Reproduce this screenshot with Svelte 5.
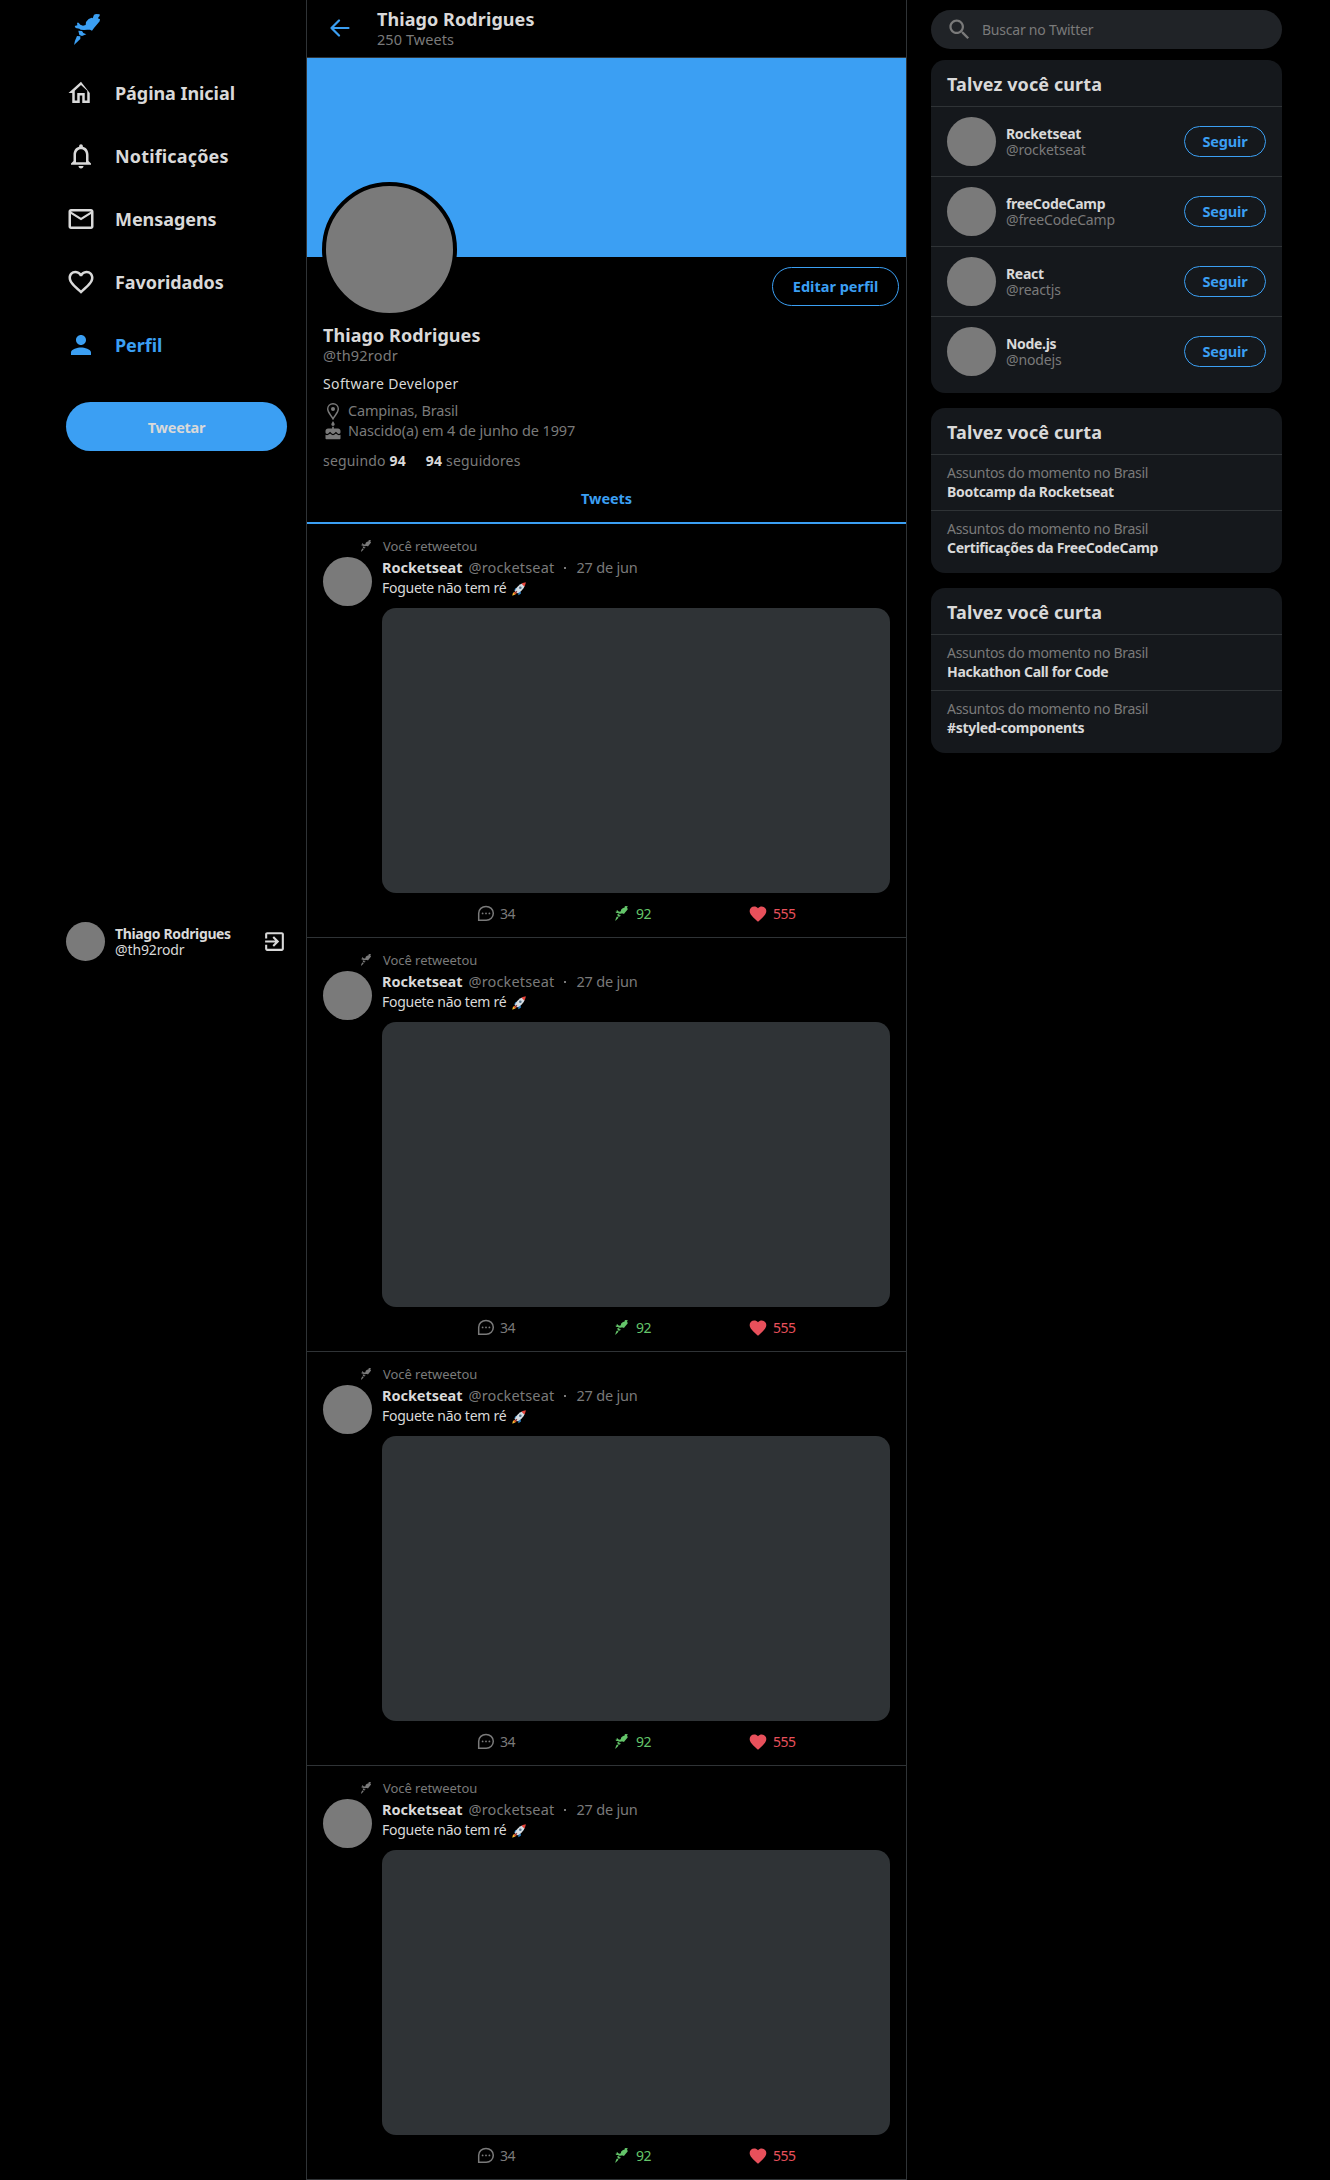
<script>
  const nav = [
    { icon: 'home', label: 'Página Inicial' },
    { icon: 'bell', label: 'Notificações' },
    { icon: 'mail', label: 'Mensagens' },
    { icon: 'heart', label: 'Favoridados' },
    { icon: 'person', label: 'Perfil', active: true }
  ];

  const paths = {
    home: 'M12 5.69l5 4.5V18h-2v-6H9v6H7v-7.81l5-4.5M12 3L2 12h3v8h6v-6h2v6h6v-8L12 3z',
    bell: 'M12 22c1.1 0 2-.9 2-2h-4c0 1.100.9 2 2 2zm6-6v-5c0-3.070-1.630-5.640-4.500-6.320V4c0-.830-.670-1.500-1.500-1.500s-1.500.670-1.500 1.500v.680C7.640 5.360 6 7.920 6 11v5l-2 2v1h16v-1l-2-2zm-2 1H8v-6c0-2.480 1.510-4.500 4-4.500s4 2.020 4 4.500v6z',
    mail: 'M22 6c0-1.100-.900-2-2-2H4c-1.100 0-2 .900-2 2v12c0 1.100.900 2 2 2h16c1.100 0 2-.900 2-2V6zm-2 0l-8 5-8-5h16zm0 12H4V8l8 5 8-5v10z',
    heart: 'M16.500 3c-1.740 0-3.410.810-4.500 2.090C10.910 3.810 9.240 3 7.500 3 4.420 3 2 5.420 2 8.500c0 3.780 3.400 6.860 8.550 11.540L12 21.350l1.450-1.320C18.600 15.360 22 12.280 22 8.500 22 5.420 19.580 3 16.500 3zm-4.400 15.550l-.100.100-.100-.100C7.140 14.240 4 11.390 4 8.500 4 6.500 5.500 5 7.500 5c1.540 0 3.040.990 3.570 2.360h1.870C13.460 5.990 14.960 5 16.500 5c2 0 3.500 1.500 3.500 3.500 0 2.890-3.140 5.740-7.900 10.050z',
    person: 'M12 12c2.210 0 4-1.790 4-4s-1.790-4-4-4-4 1.790-4 4 1.790 4 4 4zm0 2c-2.670 0-8 1.340-8 4v2h16v-2c0-2.660-5.330-4-8-4z',
    exit: 'M10.090 15.590L11.500 17l5-5-5-5-1.410 1.410L12.670 11H3v2h9.670l-2.580 2.590zM19 3H5c-1.110 0-2 .900-2 2v4h2V5h14v14H5v-4H3v4c0 1.100.890 2 2 2h14c1.100 0 2-.900 2-2V5c0-1.100-.900-2-2-2z',
    magnifier: 'M15.500 14h-.790l-.280-.270C15.410 12.590 16 11.110 16 9.500 16 5.910 13.090 3 9.500 3S3 5.910 3 9.500 5.910 16 9.500 16c1.610 0 3.090-.590 4.230-1.570l.270.280v.790l5 4.990L20.490 19l-4.990-5zm-6 0C7.010 14 5 11.990 5 9.500S7.010 5 9.500 5 14 7.010 14 9.500 11.990 14 9.500 14z',
    cake: 'M12 6c1.110 0 2-.900 2-2 0-.380-.100-.730-.290-1.030L12 0l-1.710 2.970c-.190.300-.290.650-.290 1.030 0 1.100.900 2 2 2zm4.600 9.990l-1.070-1.070-1.080 1.070c-1.300 1.300-3.580 1.310-4.890 0l-1.070-1.070-1.090 1.070C6.750 16.640 5.880 17 4.960 17c-.730 0-1.400-.230-1.960-.610V21c0 .550.450 1 1 1h16c.550 0 1-.450 1-1v-4.610c-.560.380-1.230.610-1.960.610-.920 0-1.790-.360-2.440-1.010zM18 9h-5V7h-2v2H6c-1.660 0-3 1.340-3 3v1.540c0 1.080.880 1.960 1.960 1.960.520 0 1.020-.200 1.380-.570l2.140-2.130 2.130 2.130c.740.740 2.030.740 2.770 0l2.140-2.130 2.130 2.130c.370.370.860.570 1.380.570 1.080 0 1.960-.880 1.960-1.960V12C21 10.340 19.660 9 18 9z',
    fullheart: 'M12 21.350l-1.450-1.320C5.400 15.360 2 12.280 2 8.500 2 5.420 4.420 3 7.500 3c1.740 0 3.410.810 4.500 2.090C13.090 3.810 14.760 3 16.500 3 19.580 3 22 5.420 22 8.500c0 3.780-3.400 6.860-8.550 11.540L12 21.350z'
  };

  const tweets = [1, 2, 3, 4];

  const people = [
    { name: 'Rocketseat', user: '@rocketseat' },
    { name: 'freeCodeCamp', user: '@freeCodeCamp' },
    { name: 'React', user: '@reactjs' },
    { name: 'Node.js', user: '@nodejs' }
  ];

  const topics = [
    ['Bootcamp da Rocketseat', 'Certificações da FreeCodeCamp'],
    ['Hackathon Call for Code', '#styled-components']
  ];
</script>

{#snippet glyph(name)}
  <svg class="glyph {name}" viewBox="0 0 24 24"><path d={paths[name]} /></svg>
{/snippet}

{#snippet rocket()}
  <svg class="rocket" viewBox="0 0 78 93">
    <path d="M60 2 66 0 77 1 77 6 73 10 73 14 78 15 77 22 60 42 54 50 48 47 40 47 30 48 20 47 16 44 5 42 2 36 10 34 9 26 14 26 19 32 27 35 35 33 36 24 44 15 53 11 56 13Z" />
    <path d="M13 50 24 51 28 57 37 61 24 66 16 63Z" />
    <path d="M9 66 19 67 19 75 0 93 3 80Z" />
  </svg>
{/snippet}

<div class="page">
  <aside class="menu">
    <div class="logo">{@render rocket()}</div>
    <nav>
      {#each nav as item}
        <a class="nav-item {item.icon}-link" class:active={item.active}>
          <span class="nav-icon">{@render glyph(item.icon)}</span>
          <span>{item.label}</span>
        </a>
      {/each}
    </nav>
    <button class="tweet-button">Tweetar</button>
    <div class="account">
      <div class="avatar small"></div>
      <div class="account-text">
        <strong>Thiago Rodrigues</strong>
        <span>@th92rodr</span>
      </div>
      {@render glyph('exit')}
    </div>
  </aside>

  <main>
    <header>
      <svg class="back" viewBox="0 0 20 18">
        <path d="M18.500 9H1.500M9 1.500 1.500 9 9 16.500" />
      </svg>
      <div>
        <strong>Thiago Rodrigues</strong>
        <span>250 Tweets</span>
      </div>
    </header>

    <div class="banner"><div class="portrait"></div></div>

    <section class="profile">
      <button class="edit">Editar perfil</button>
      <h1>Thiago Rodrigues</h1>
      <p class="handle">@th92rodr</p>
      <p class="bio">Software Developer</p>
      <ul class="facts">
        <li>
          <svg class="pin" viewBox="0 0 12 17">
            <path d="M6 .7C3 .7.700 3 .700 6c0 3.600 3.400 6.200 5.300 9.900C7.900 12.200 11.300 9.600 11.300 6 11.300 3 9 .7 6 .7Z" />
            <circle cx="6" cy="6" r="2" />
          </svg>
          <span class="place">Campinas, Brasil</span>
        </li>
        <li>{@render glyph('cake')}<span>Nascido(a) em 4 de junho de 1997</span></li>
      </ul>
      <div class="follow">
        <span>seguindo <b>94</b></span>
        <span><b>94</b> seguidores</span>
      </div>
    </section>

    <div class="tab">Tweets</div>

    {#each tweets as tweet (tweet)}
      <article>
        <div class="retweeted">{@render rocket()}<span>Você retweetou</span></div>
        <div class="body">
          <div class="avatar"></div>
          <div class="content">
            <div class="author">
              <strong>Rocketseat</strong>
              <span class="user">@rocketseat</span>
              <span class="dot"></span>
              <time>27 de jun</time>
            </div>
            <p class="text">
              <span>Foguete não tem ré</span>
              <svg class="emoji" viewBox="0 0 14 14">
                <path fill="#2b7fc0" d="M3.300 6.300 6 5.200 4.600 8 2 9ZM8.600 9.300 9 11.500 6.400 13.200 6.200 10.600Z" />
                <path fill="#f6b82c" d="M2.200 9.700 4.500 11.800 2.600 12.700.300 13.800.700 11.500Z" />
                <path fill="#df3b2f" d="M3.200 9.200 4.900 10.900 3 12 1.900 11.200Z" />
                <path fill="#d5dde3" d="M10.200 1.500 12.600 3.900C11.900 6.800 8 10.300 5.200 11.300L2.800 8.900C4.300 5.500 7.200 2.400 10.200 1.500Z" />
                <path fill="#e8443a" d="M9.600 1.700C11 .800 12.600.400 13.800.300 13.700 1.500 13.300 3.200 12.300 4.600Z" />
                <circle cx="8.300" cy="5.800" r="1.300" fill="#52718a" />
                <path fill="#8a3038" d="M4.500 8.700 5.400 9.600 3.400 11.500 2.800 10.900Z" />
              </svg>
            </p>
            <div class="media"></div>
            <div class="actions">
              <div class="comment">
                <svg class="bubble" viewBox="0 0 18 17">
                  <path d="M1.700 15.300V8.200C1.700 4.300 4.900 1.400 9 1.400S16.300 4.400 16.300 8.300 13.200 15.300 9.200 15.300Z" />
                  <circle cx="5.600" cy="8.400" r=".9" /><circle cx="9" cy="8.400" r=".9" /><circle cx="12.400" cy="8.400" r=".9" />
                </svg>
                <span>34</span>
              </div>
              <div class="share">{@render rocket()}<span>92</span></div>
              <div class="like">{@render glyph('fullheart')}<span>555</span></div>
            </div>
          </div>
        </div>
      </article>
    {/each}
  </main>

  <aside class="side">
    <label class="search">
      {@render glyph('magnifier')}
      <span>Buscar no Twitter</span>
    </label>

    <section class="card">
      <h2>Talvez você curta</h2>
      {#each people as person}
        <div class="person-row">
          <div class="avatar"></div>
          <div class="names">
            <strong>{person.name}</strong>
            <span>{person.user}</span>
          </div>
          <button class="follow-button">Seguir</button>
        </div>
      {/each}
    </section>

    {#each topics as group}
      <section class="card">
        <h2>Talvez você curta</h2>
        {#each group as topic}
          <div class="topic">
            <span>Assuntos do momento no Brasil</span>
            <strong>{topic}</strong>
          </div>
        {/each}
      </section>
    {/each}
  </aside>
</div>

<style>
  :global(body) {
    background: #000;
  }

  .page {
    --blue: #3b9ff3;
    --gray: #7a7a7a;
    --line: #2f3336;
    --white: #d9d9d9;
    display: grid;
    grid-template-columns: 221px 601px 356px;
    column-gap: 19px;
    padding-left: 66px;
    width: 1264px;
    height: 2180px;
    overflow: hidden;
    color: var(--white);
    font-family: 'Noto Sans', sans-serif;
    font-size: 14px;
    line-height: 20px;
  }

  .page * {
    box-sizing: border-box;
  }

  h1,
  h2,
  p,
  ul {
    margin: 0;
    padding: 0;
    list-style: none;
  }

  button {
    padding: 0;
    font: inherit;
    font-size: 14.5px;
    font-weight: 700;
    border-radius: 25px;
  }

  svg {
    display: block;
    flex: none;
    fill: currentColor;
  }

  .glyph {
    width: 30px;
    height: 30px;
  }

  .avatar {
    flex: none;
    width: 49px;
    height: 49px;
    border-radius: 50%;
    background: var(--gray);
  }

  /* left menu */
  .menu {
    display: flex;
    flex-direction: column;
    height: 961px;
  }

  .logo {
    padding: 14px 0 0 8px;
    color: var(--blue);
  }

  .logo .rocket {
    width: 26px;
    height: 31px;
  }

  nav {
    display: flex;
    flex-direction: column;
    gap: 23px;
    margin-top: 28px;
  }

  .nav-item {
    display: flex;
    align-items: center;
    gap: 19px;
    height: 40px;
    font-size: 18px;
    font-weight: 700;
    letter-spacing: -0.06px;
  }

  .bell-link {
    letter-spacing: 0.15px;
  }

  .nav-icon {
    width: 30px;
  }

  .active {
    color: var(--blue);
  }

  .tweet-button {
    height: 49px;
    margin-top: 37px;
    border: 0;
    background: var(--blue);
    color: var(--white);
    letter-spacing: -0.25px;
  }

  .account {
    display: flex;
    align-items: center;
    margin-top: auto;
  }

  .avatar.small {
    width: 39px;
    height: 39px;
  }

  .account-text {
    display: flex;
    flex: 1;
    flex-direction: column;
    margin-left: 10px;
    line-height: 16px;
    letter-spacing: -0.13px;
  }

  .account-text strong {
    letter-spacing: -0.36px;
  }

  .exit {
    width: 25px;
    height: 25px;
  }

  /* centre column */
  main {
    border: solid var(--line);
    border-width: 0 1px;
  }

  header {
    display: flex;
    height: 58px;
    padding: 9px 0 0 23px;
    border-bottom: 1px solid var(--line);
  }

  header div {
    display: flex;
    flex-direction: column;
    margin-left: 27px;
  }

  header strong {
    font-size: 18px;
    letter-spacing: 0.08px;
  }

  header span {
    color: var(--gray);
    font-size: 14.5px;
    line-height: 21px;
    letter-spacing: 0.06px;
  }

  .back {
    width: 20px;
    height: 18px;
    margin-top: 10px;
    fill: none;
    stroke: var(--blue);
    stroke-width: 2.2;
    stroke-linecap: round;
    stroke-linejoin: round;
  }

  .banner {
    height: 199px;
    padding: 124px 0 0 15px;
    background: var(--blue);
  }

  .portrait {
    width: 135px;
    height: 135px;
    border: 4px solid #000;
    border-radius: 50%;
    background: var(--gray);
  }

  .profile {
    display: flow-root;
    height: 213px;
    padding: 10px 7px 0 16px;
  }

  .edit {
    float: right;
    width: 127px;
    height: 39px;
    padding-bottom: 2px;
    border: 1px solid var(--blue);
    background: none;
    color: var(--blue);
  }

  h1 {
    margin-top: 57px;
    font-size: 18px;
    line-height: 22px;
    letter-spacing: 0.08px;
  }

  .handle {
    color: var(--gray);
    font-size: 14.5px;
    line-height: 19px;
    letter-spacing: 0.2px;
  }

  .bio {
    margin-top: 9px;
    letter-spacing: 0.36px;
  }

  .facts {
    margin-top: 6px;
    color: var(--gray);
    font-size: 14.5px;
    letter-spacing: -0.11px;
  }

  .place {
    letter-spacing: -0.18px;
  }

  .facts li {
    display: flex;
    align-items: center;
    gap: 4px;
    height: 20px;
  }

  .pin {
    width: 12px;
    height: 17px;
    margin: 3px 5px 0 4px;
    fill: none;
    stroke: currentColor;
    stroke-width: 1.4;
  }

  .pin circle {
    fill: currentColor;
    stroke: none;
  }

  .cake {
    width: 20px;
    height: 20px;
    margin-top: 2px;
    margin-right: 1px;
  }

  .follow {
    display: flex;
    gap: 20px;
    margin-top: 11px;
    color: var(--gray);
    letter-spacing: 0.18px;
  }

  .follow b {
    color: var(--white);
  }

  .tab {
    height: 54px;
    padding-top: 18px;
    border-bottom: 2px solid var(--blue);
    color: var(--blue);
    font-size: 14.5px;
    font-weight: 700;
    text-align: center;
    letter-spacing: -0.1px;
  }

  /* tweets */
  article {
    height: 414px;
    padding: 13px 16px 0;
    border-bottom: 1px solid var(--line);
  }

  .retweeted {
    display: flex;
    align-items: center;
    height: 18px;
    margin-bottom: 2px;
    padding-left: 38px;
    color: var(--gray);
    font-size: 13px;
    letter-spacing: -0.05px;
  }

  .retweeted .rocket {
    width: 10px;
    height: 12px;
    margin-right: 12px;
  }

  .body {
    display: flex;
    gap: 10px;
  }

  .content {
    flex: 1;
  }

  .author {
    display: flex;
    align-items: center;
    height: 20px;
    color: var(--gray);
    font-size: 14.5px;
    letter-spacing: 0.17px;
  }

  .author strong {
    margin-right: 6px;
    color: var(--white);
    letter-spacing: -0.05px;
  }

  .author time {
    letter-spacing: -0.2px;
  }

  .dot {
    width: 2px;
    height: 2px;
    margin: 2px 10px 0;
    background: currentColor;
  }

  .text {
    display: flex;
    align-items: center;
    padding-top: 1px;
    letter-spacing: -0.27px;
  }

  .emoji {
    width: 14px;
    height: 14px;
    margin-left: 6px;
    margin-top: 1px;
  }

  .media {
    height: 285px;
    margin-top: 10px;
    border-radius: 14px;
    background: var(--line);
  }

  .actions {
    display: flex;
    height: 20px;
    margin-top: 11px;
    padding-left: 95px;
    color: var(--gray);
    letter-spacing: -0.5px;
  }

  .actions div {
    display: flex;
    align-items: center;
  }

  .comment {
    width: 138px;
  }

  .bubble {
    width: 18px;
    height: 17px;
    margin: 0 5px 1px 0;
    fill: none;
    stroke: currentColor;
    stroke-width: 1.5;
  }

  .bubble circle {
    fill: currentColor;
    stroke: none;
  }

  .share {
    width: 133px;
    color: #64c56a;
  }

  .share .rocket {
    width: 13px;
    height: 15px;
    margin: 0 8px 1px 0;
  }

  .like {
    color: #e8505b;
  }

  .fullheart {
    width: 20px;
    height: 20px;
    margin: 0 5px 1px 0;
  }

  /* right column */
  .side {
    padding: 10px 0 0 5px;
  }

  .search {
    display: flex;
    align-items: center;
    height: 39px;
    padding-left: 15px;
    border-radius: 20px;
    background: #202327;
    color: var(--gray);
    letter-spacing: -0.23px;
  }

  .search span {
    margin-left: 9px;
  }

  .magnifier {
    width: 27px;
    height: 27px;
  }

  .card {
    margin-bottom: 15px;
    padding-bottom: 6px;
    border-radius: 14px;
    background: #15181c;
  }

  .search + .card {
    margin-top: 11px;
  }

  h2 {
    height: 46px;
    padding: 12px 16px 0;
    font-size: 18px;
    line-height: 24px;
    letter-spacing: 0.1px;
  }

  .person-row {
    display: flex;
    height: 70px;
    align-items: center;
    padding: 0 16px;
    border-top: 1px solid var(--line);
  }

  .person-row:last-child {
    height: 71px;
    padding-bottom: 1px;
  }

  .names {
    display: flex;
    flex: 1;
    flex-direction: column;
    margin-left: 10px;
    line-height: 16px;
  }

  .names strong,
  .topic strong {
    letter-spacing: -0.31px;
  }

  .names span {
    color: var(--gray);
    letter-spacing: -0.15px;
  }

  .follow-button {
    width: 82px;
    height: 31px;
    padding-bottom: 2px;
    border: 1px solid var(--blue);
    background: none;
    color: var(--blue);
    letter-spacing: -0.18px;
  }

  .topic {
    display: flex;
    flex-direction: column;
    height: 56px;
    padding: 8px 16px 0;
    border-top: 1px solid var(--line);
    line-height: 19px;
  }

  .topic:last-child {
    height: 57px;
  }

  .topic span {
    color: var(--gray);
    letter-spacing: -0.3px;
  }
</style>
